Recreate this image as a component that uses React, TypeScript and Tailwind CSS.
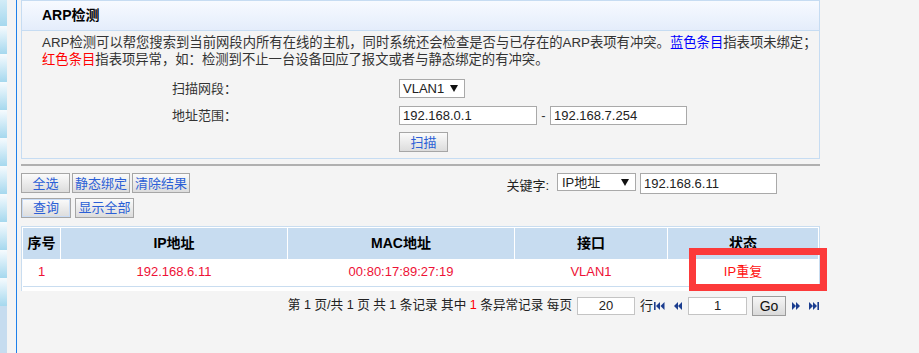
import React from "react";

const Btn = ({
  children,
  className = "",
}: {
  children: React.ReactNode;
  className?: string;
}) => (
  <button
    className={
      "flex h-[20px] items-center justify-center border border-[#a6a6a6] bg-gradient-to-b from-[#fbfbfb] to-[#dcdcdc] text-[13px] leading-none text-[#2b5fd6] " +
      className
    }
  >
    {children}
  </button>
);

const Caret = () => (
  <svg width="8" height="7" viewBox="0 0 8 7" className="shrink-0">
    <polygon points="0,0 8,0 4,7" fill="#111" />
  </svg>
);

const Field = ({
  value,
  className = "",
}: {
  value: string;
  className?: string;
}) => (
  <div
    className={
      "flex items-center border border-[#a9a9a9] bg-white pl-[3px] text-[13px] leading-none text-[#222] " +
      className
    }
  >
    {value}
  </div>
);

const Sidebar = () => (
  <div className="flex w-[7px] flex-col">
    <div className="h-[26px] bg-gradient-to-b from-[#d3ecf7] to-[#a5d8ee]" />
    {Array.from({ length: 10 }).map((_, i) => (
      <div
        key={i}
        className="h-[28px] bg-gradient-to-b from-[#f6fbfe] to-[#a5d8ee]"
      />
    ))}
    <div className="flex-1 bg-[#c6dcef]" />
  </div>
);

// pager arrows
const First = () => (
  <svg width="11" height="8" viewBox="0 0 11 8">
    <rect x="0" y="0" width="1.6" height="8" fill="#1b3d8f" />
    <polygon points="6,0 2,4 6,8" fill="#1b3d8f" />
    <polygon points="10.5,0 6.5,4 10.5,8" fill="#1b3d8f" />
  </svg>
);
const Prev = () => (
  <svg width="8" height="8" viewBox="0 0 8 8">
    <polygon points="4,0 0,4 4,8" fill="#1b3d8f" />
    <polygon points="8,0 4,4 8,8" fill="#1b3d8f" />
  </svg>
);
const Next = () => (
  <svg width="8" height="8" viewBox="0 0 8 8">
    <polygon points="0,0 4,4 0,8" fill="#1b3d8f" />
    <polygon points="4,0 8,4 4,8" fill="#1b3d8f" />
  </svg>
);
const Last = () => (
  <svg width="10" height="8" viewBox="0 0 10 8">
    <polygon points="0,0 4,4 0,8" fill="#1b3d8f" />
    <polygon points="4,0 8,4 4,8" fill="#1b3d8f" />
    <rect x="8.4" y="0" width="1.6" height="8" fill="#1b3d8f" />
  </svg>
);

const cols = ["w-[37px]", "w-[226px]", "w-[226px]", "w-[152px]", "w-[150px]"];
const heads = ["序号", "IP地址", "MAC地址", "接口", "状态"];
const row = ["1", "192.168.6.11", "00:80:17:89:27:19", "VLAN1", "IP重复"];

export default function App() {
  return (
    <div className="relative flex h-[353px] w-[919px] overflow-hidden bg-[#f4f4f4] font-['Liberation_Sans','Noto_Sans_CJK_SC',sans-serif] text-[13px] text-[#333]">
      <Sidebar />
      <div className="w-[9px]" />
      <div className="w-px bg-[#1f80ea]" />

      <div className="w-[803px] pl-[4px]">
        {/* ARP panel */}
        <div className="border border-[#c6dcf2]">
          <div className="flex h-[30px] items-center border-b border-[#c6dcf2] bg-gradient-to-b from-[#f7faff] to-[#e4edfb] pl-[20px] text-[14px] font-bold text-black">
            ARP检测
          </div>
          <div className="whitespace-nowrap pl-[20px] pt-[3px] text-[13.33px] leading-[17px]">
            ARP检测可以帮您搜索到当前网段内所有在线的主机，同时系统还会检查是否与已存在的ARP表项有冲突。
            <span className="text-[#0000ff]">蓝色条目</span>指表项未绑定；
            <br />
            <span className="text-[#ff0000]">红色条目</span>
            指表项异常，如：检测到不止一台设备回应了报文或者与静态绑定的有冲突。
          </div>
          <div className="mt-[11px] grid grid-cols-[227px_auto] items-center gap-y-[7px] pb-[6px] pl-[150px]">
            <span>扫描网段：</span>
            <div className="flex h-[19px] w-[66px] items-center justify-between border border-[#a9a9a9] bg-white pl-[3px] pr-[6px] leading-none text-[#222]">
              VLAN1
              <Caret />
            </div>
            <span>地址范围：</span>
            <div className="flex items-center">
              <Field value="192.168.0.1" className="h-[19px] w-[138px]" />
              <span className="w-[13px] text-center">-</span>
              <Field value="192.168.7.254" className="h-[19px] w-[137px]" />
            </div>
            <span />
            <Btn className="w-[49px] text-[#2a6ee0]">扫描</Btn>
          </div>
        </div>

        <div className="mt-[5px] h-[2px] bg-[#b0b0b0]" />

        {/* toolbar */}
        <div className="mt-[7px] flex items-start">
          <div className="flex gap-[2px]">
            <Btn className="w-[49px]">全选</Btn>
            <Btn className="w-[58px]">静态绑定</Btn>
            <Btn className="w-[58px]">清除结果</Btn>
          </div>
          <div className="ml-auto mr-[43px] flex items-start">
            <span className="mt-[3px] text-[#222]">关键字:</span>
            <div className="ml-[8px] flex h-[18px] w-[79px] items-center justify-between border border-[#a9a9a9] bg-white pl-[4px] pr-[6px] leading-none text-[#222]">
              IP地址
              <Caret />
            </div>
            <Field value="192.168.6.11" className="ml-[4px] h-[21px] w-[137px]" />
          </div>
        </div>
        <div className="mt-[2px] flex gap-[4px]">
          <Btn className="w-[50px] border-[#5d95e6] shadow-[inset_0_0_0_1px_#c8dcf7]">
            查询
          </Btn>
          <Btn className="w-[59px]">显示全部</Btn>
        </div>

        {/* result table */}
        <div className="mt-[8px] border-x border-t border-[#c9ddf0] bg-white p-px pb-[4px]">
          <div className="flex h-[31px] gap-px">
            {heads.map((h, i) => (
              <div
                key={h}
                className={
                  "flex items-center justify-center bg-[#c7dcf0] text-[14px] font-bold text-black " +
                  cols[i]
                }
              >
                {h}
              </div>
            ))}
          </div>
          <div className="flex h-[28px] gap-px border-b border-[#c9ddf0]">
            {row.map((v, i) => (
              <div
                key={i}
                className={
                  "flex items-center justify-center text-[13px] " +
                  (i === 4 ? "text-[#ff1010] " : "text-[#ee1136] ") +
                  cols[i]
                }
              >
                {v}
              </div>
            ))}
          </div>
        </div>

        {/* pager */}
        <div className="mt-[5px] flex items-center justify-end pr-[1px] text-[#222]">
          <span className="whitespace-pre text-[12.6px]">
            第 1 页/共 1 页 共 1 条记录 其中 <span className="text-[#ff0000]">1</span> 条异常记录 每页
          </span>
          <div className="ml-[5px] flex h-[18px] w-[58px] items-center justify-center border border-[#c4c4c4] bg-white leading-none">
            20
          </div>
          <span className="ml-[5px]">行</span>
          <span className="ml-[1px]">
            <First />
          </span>
          <span className="ml-[9px]">
            <Prev />
          </span>
          <div className="ml-[6px] flex h-[18px] w-[59px] items-center justify-center border border-[#c4c4c4] bg-white leading-none">
            1
          </div>
          <button className="ml-[5px] flex h-[20px] w-[34px] items-center justify-center border border-[#9c9c9c] bg-gradient-to-b from-[#f6f6f6] to-[#dadada] text-[14px] leading-none text-[#111]">
            Go
          </button>
          <span className="ml-[6px]">
            <Next />
          </span>
          <span className="ml-[9px]">
            <Last />
          </span>
        </div>
      </div>

      {/* annotation box */}
      <div className="absolute left-[689px] top-[248px] h-[43px] w-[138px] border-[7px] border-[#fc3a3a]" />
    </div>
  );
}
